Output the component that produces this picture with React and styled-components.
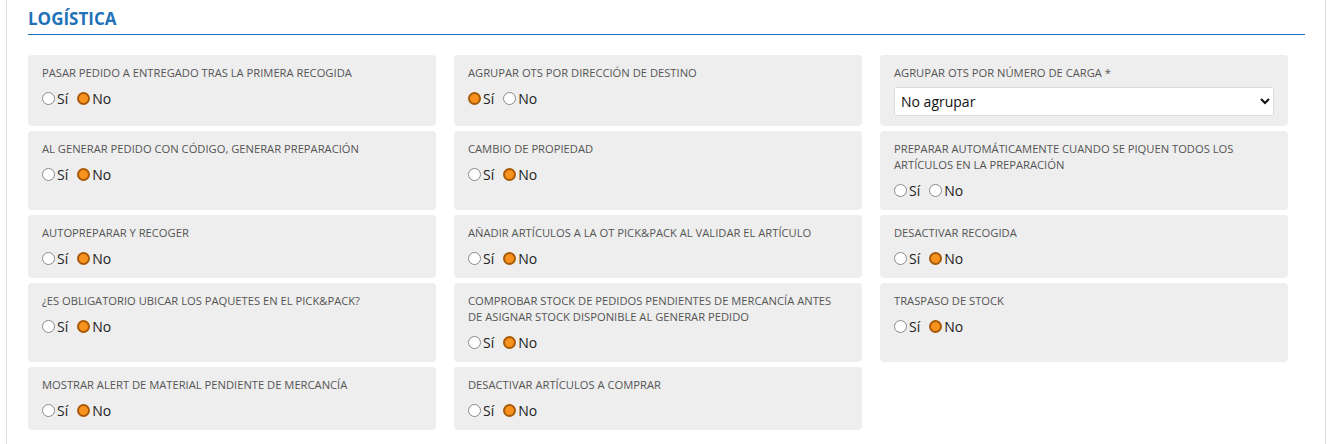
import React from "react";
import styled, { createGlobalStyle } from "styled-components";

const GlobalStyle = createGlobalStyle`
  html, body {
    margin: 0;
    padding: 0;
    background: #fff;
    font-family: "Open Sans", "Liberation Sans", sans-serif;
  }
`;

const Panel = styled.div`
  margin-left: 6px;
  width: 1320px;
  min-height: 444px;
  box-sizing: border-box;
  border-left: 1px solid #dedede;
  border-right: 1px solid #dedede;
  padding: 7px 20px 0 21px;
`;

const Title = styled.h2`
  margin: 0;
  font-size: 17px;
  line-height: 24px;
  font-weight: 700;
  color: #1f72b8;
  padding-bottom: 3px;
  border-bottom: 1px solid #1f72b8;
`;

const Grid = styled.div`
  margin-top: 20px;
  margin-right: 18px;
  display: grid;
  grid-template-columns: repeat(3, 408px);
  column-gap: 18px;
  row-gap: 5px;
`;

const Card = styled.div`
  background: #eeeeee;
  border-radius: 4px;
  padding: 10px 14px;
  box-sizing: border-box;
`;

const Label = styled.div`
  font-size: 11.2px;
  line-height: 16px;
  color: #555;
  text-transform: uppercase;
  margin-bottom: 7px;
`;

const Options = styled.div`
  display: flex;
  align-items: center;
  height: 20px;
  gap: 9px;
`;

const Option = styled.label`
  display: flex;
  align-items: center;
  gap: 2px;
  font-size: 14px;
  color: #222;
`;

const Radio = styled.input.attrs({ type: "radio" })`
  appearance: none;
  margin: 0;
  width: 13px;
  height: 13px;
  border-radius: 50%;
  box-sizing: border-box;
  border: 1px solid #8a8a8a;
  background: #fff;

  &:checked {
    border: 2px solid #a85a08;
    background: #f7921c;
  }
`;

const Select = styled.select`
  display: block;
  width: 100%;
  height: 29px;
  margin-top: -1px;
  border: 1px solid #dcdcdc;
  background: #fff;
  font-family: "Open Sans", "Liberation Sans", sans-serif;
  font-size: 14px;
  color: #111;
  padding: 0 2px;
  border-radius: 2px;
`;

const settings = [
  { label: "Pasar pedido a entregado tras la primera recogida", value: "no" },
  { label: "Agrupar OTs por dirección de destino", value: "si" },
  { label: "Agrupar OTs por número de carga *", select: true },
  { label: "Al generar pedido con código, generar preparación", value: "no" },
  { label: "Cambio de propiedad", value: "no" },
  {
    label: "Preparar automáticamente cuando se piquen todos los artículos en la preparación",
    value: null,
  },
  { label: "Autopreparar y recoger", value: "no" },
  { label: "Añadir artículos a la OT Pick&Pack al validar el artículo", value: "no" },
  { label: "Desactivar recogida", value: "no" },
  { label: "¿Es obligatorio ubicar los paquetes en el Pick&Pack?", value: "no" },
  {
    label: "Comprobar stock de pedidos pendientes de mercancía antes de asignar stock disponible al generar pedido",
    value: "no",
  },
  { label: "Traspaso de stock", value: "no" },
  { label: "Mostrar alert de material pendiente de mercancía", value: "no" },
  { label: "Desactivar artículos a comprar", value: "no" },
];

const Setting = ({ item, index }) => (
  <Card>
    <Label>{item.label}</Label>
    {item.select ? (
      <Select defaultValue="none">
        <option value="none">No agrupar</option>
      </Select>
    ) : (
      <Options>
        <Option>
          <Radio name={`opt${index}`} defaultChecked={item.value === "si"} />
          Sí
        </Option>
        <Option>
          <Radio name={`opt${index}`} defaultChecked={item.value === "no"} />
          No
        </Option>
      </Options>
    )}
  </Card>
);

const App = () => (
  <>
    <GlobalStyle />
    <Panel>
      <Title>LOGÍSTICA</Title>
      <Grid>
        {settings.map((item, i) => (
          <Setting key={i} item={item} index={i} />
        ))}
      </Grid>
    </Panel>
  </>
);

export default App;
